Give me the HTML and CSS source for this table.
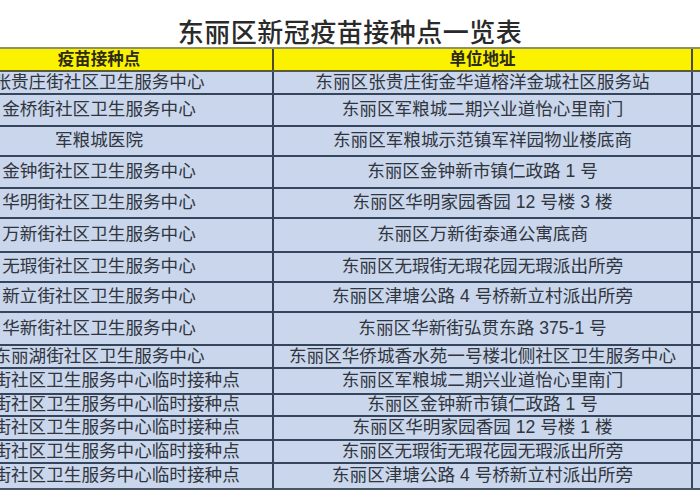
FILE: index.html
```html
<!DOCTYPE html>
<html lang="zh-CN">
<head>
<meta charset="utf-8">
<title>东丽区新冠疫苗接种点一览表</title>
<link rel="stylesheet" href="styles.css">
</head>
<body>
<div class="page">
  <h1 class="title">东丽区新冠疫苗接种点一览表</h1>
  <div class="sheet">
    <div class="row head"><div class="cell">疫苗接种点</div><div class="cell">单位地址</div><div class="cell"></div></div>
    <div class="row"><div class="cell">张贵庄街社区卫生服务中心</div><div class="cell">东丽区张贵庄街金华道榕洋金城社区服务站</div><div class="cell"></div></div>
    <div class="row"><div class="cell">金桥街社区卫生服务中心</div><div class="cell">东丽区军粮城二期兴业道怡心里南门</div><div class="cell"></div></div>
    <div class="row"><div class="cell">军粮城医院</div><div class="cell">东丽区军粮城示范镇军祥园物业楼底商</div><div class="cell"></div></div>
    <div class="row"><div class="cell">金钟街社区卫生服务中心</div><div class="cell">东丽区金钟新市镇仁政路 1 号</div><div class="cell"></div></div>
    <div class="row"><div class="cell">华明街社区卫生服务中心</div><div class="cell">东丽区华明家园香园 12 号楼 3 楼</div><div class="cell"></div></div>
    <div class="row"><div class="cell">万新街社区卫生服务中心</div><div class="cell">东丽区万新街泰通公寓底商</div><div class="cell"></div></div>
    <div class="row"><div class="cell">无瑕街社区卫生服务中心</div><div class="cell">东丽区无瑕街无瑕花园无瑕派出所旁</div><div class="cell"></div></div>
    <div class="row"><div class="cell">新立街社区卫生服务中心</div><div class="cell">东丽区津塘公路 4 号桥新立村派出所旁</div><div class="cell"></div></div>
    <div class="row"><div class="cell">华新街社区卫生服务中心</div><div class="cell">东丽区华新街弘贯东路 375-1 号</div><div class="cell"></div></div>
    <div class="row"><div class="cell">东丽湖街社区卫生服务中心</div><div class="cell">东丽区华侨城香水苑一号楼北侧社区卫生服务中心</div><div class="cell"></div></div>
    <div class="row"><div class="cell">金桥街社区卫生服务中心临时接种点</div><div class="cell">东丽区军粮城二期兴业道怡心里南门</div><div class="cell"></div></div>
    <div class="row"><div class="cell">金钟街社区卫生服务中心临时接种点</div><div class="cell">东丽区金钟新市镇仁政路 1 号</div><div class="cell"></div></div>
    <div class="row"><div class="cell">华明街社区卫生服务中心临时接种点</div><div class="cell">东丽区华明家园香园 12 号楼 1 楼</div><div class="cell"></div></div>
    <div class="row"><div class="cell">无瑕街社区卫生服务中心临时接种点</div><div class="cell">东丽区无瑕街无瑕花园无瑕派出所旁</div><div class="cell"></div></div>
    <div class="row"><div class="cell">新立街社区卫生服务中心临时接种点</div><div class="cell">东丽区津塘公路 4 号桥新立村派出所旁</div><div class="cell"></div></div>
  </div>
</div>
</body>
</html>
```
FILE: styles.css
```css
* { box-sizing: border-box; }
html, body { margin: 0; padding: 0; background: #ffffff; }
body {
  width: 700px;
  height: 500px;
  overflow: hidden;
  font-family: "Liberation Sans", "Noto Sans CJK SC", sans-serif;
  color: #30353e;
}
.page { width: 700px; overflow: hidden; }
.title {
  margin: 0;
  height: 47px;
  padding-top: 16px;
  text-align: center;
  font-family: "Noto Sans CJK SC", serif;
  font-weight: 500;
  font-size: 26px;
  line-height: 30px;
  color: #2a2a2a;
  letter-spacing: 0.5px;
}
.sheet {
  margin-left: -74px;
  width: 870px;
  border-top: 2px solid #8f8f6a;
  border-bottom: 2px solid #4a5564;
}
.row {
  display: grid;
  grid-template-columns: 348px 419px 103px;
  background: #c9d6eb;
  border-bottom: 2px solid #34455c;
  height: 30px;
}
.row:last-child { border-bottom: none; }
.cell {
  display: flex;
  align-items: center;
  justify-content: center;
  white-space: nowrap;
  font-size: 17.6px;
  line-height: 1;
  border-right: 2px solid #34455c;
  overflow: hidden;
}
.cell:last-child { border-right: none; }
.head {
  background: #fbf200;
  border-bottom: 2px solid #5b5a3c;
  height: 23px;
}
.head .cell {
  font-weight: bold;
  font-size: 16.5px;
  color: #2c2a18;
  border-right-color: #4c4a30;
}
.row:nth-child(2) { height: 23px; }
.row:nth-child(3) { height: 32px; }
.row:nth-child(4) { height: 30px; }
.row:nth-child(5) { height: 32px; }
.row:nth-child(6) { height: 30px; }
.row:nth-child(7) { height: 34px; }
.row:nth-child(8) { height: 30px; }
.row:nth-child(9) { height: 30px; }
.row:nth-child(10) { height: 33px; }
.row:nth-child(11) { height: 23px; }
.row:nth-child(12) { height: 26px; }
.row:nth-child(13) { height: 22px; }
.row:nth-child(14) { height: 24px; }
.row:nth-child(15) { height: 23px; }
.row:nth-child(16) { height: 24px; }
```
